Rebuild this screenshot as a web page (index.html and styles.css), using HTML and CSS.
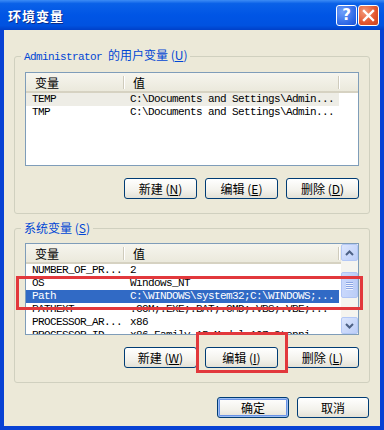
FILE: index.html
```html
<!DOCTYPE html>
<html lang="zh-CN">
<head>
    <meta charset="UTF-8">
    <title>环境变量</title>
    <link rel="stylesheet" href="styles.css">
</head>
<body>
    <div class="window">
        <div class="titlebar">
            <span class="title">环境变量</span>
            <div class="title-buttons">
                <span class="tbtn help">?</span>
                <span class="tbtn close">
                    <svg width="13" height="13" viewBox="0 0 13 13"><path d="M2 2 L11 11 M11 2 L2 11" stroke="#fff" stroke-width="2.4" stroke-linecap="square"/></svg>
                </span>
            </div>
        </div>
        <div class="body">
            <fieldset class="group">
                <legend><span class="latin">Administrator </span>的用户变量 (<u>U</u>)</legend>
                <div class="list list-user">
                    <div class="list-main">
                        <div class="list-head"><span>变量</span><span>值</span><span></span></div>
                        <div class="row inactive"><span>TEMP</span><span>C:\Documents and Settings\Admin...</span></div>
                        <div class="row"><span>TMP</span><span>C:\Documents and Settings\Admin...</span></div>
                    </div>
                </div>
                <div class="buttons">
                    <button class="btn">新建 (<u>N</u>)</button>
                    <button class="btn">编辑 (<u>E</u>)</button>
                    <button class="btn">删除 (<u>D</u>)</button>
                </div>
            </fieldset>
            <fieldset class="group group-system">
                <legend>系统变量 (<u>S</u>)</legend>
                <div class="list list-system">
                    <div class="list-main">
                        <div class="list-head"><span>变量</span><span>值</span><span></span></div>
                        <div class="row"><span>NUMBER_OF_PR...</span><span>2</span></div>
                        <div class="row"><span>OS</span><span>Windows_NT</span></div>
                        <div class="row selected"><span>Path</span><span>C:\WINDOWS\system32;C:\WINDOWS;...</span></div>
                        <div class="row"><span>PATHEXT</span><span>.COM;.EXE;.BAT;.CMD;.VBS;.VBE;...</span></div>
                        <div class="row"><span>PROCESSOR_AR...</span><span>x86</span></div>
                        <div class="row"><span>PROCESSOR_ID...</span><span>x86 Family 15 Model 107 Steppi...</span></div>
                    </div>
                    <div class="scrollbar">
                        <span class="sbtn">
                            <svg width="9" height="6" viewBox="0 0 9 6"><path d="M1 5 L4.5 1.5 L8 5" fill="none" stroke="#4D6185" stroke-width="2"/></svg>
                        </span>
                        <div class="track">
                            <span class="thumb"><i></i><i></i><i></i><i></i></span>
                        </div>
                        <span class="sbtn">
                            <svg width="9" height="6" viewBox="0 0 9 6"><path d="M1 1 L4.5 4.5 L8 1" fill="none" stroke="#4D6185" stroke-width="2"/></svg>
                        </span>
                    </div>
                </div>
                <div class="buttons">
                    <button class="btn">新建 (<u>W</u>)</button>
                    <button class="btn">编辑 (<u>I</u>)</button>
                    <button class="btn">删除 (<u>L</u>)</button>
                </div>
            </fieldset>
            <div class="footer">
                <button class="btn btn-wide default">确定</button>
                <button class="btn btn-wide">取消</button>
            </div>
        </div>
        <div class="mark mark-rows"></div>
        <div class="mark mark-edit"></div>
    </div>
</body>
</html>
```

FILE: styles.css
```css
body {
    margin: 0;
    font-family: "Noto Sans CJK SC", "DejaVu Sans", sans-serif;
    font-size: 12px;
    color: #000;
}
.window {
    position: relative;
    width: 384px;
    height: 430px;
    box-sizing: border-box;
    display: flex;
    flex-direction: column;
    background-color: #ECE9D8;
    border: 0 solid #0842D4;
    border-width: 0 4px 4px 4px;
}
.titlebar {
    height: 30px;
    margin: 0 -4px;
    padding: 0 5px 0 8px;
    display: flex;
    align-items: center;
    justify-content: space-between;
    background: linear-gradient(#3D8CF5 0%, #0A61E8 12%, #0055E5 50%, #0052E0 85%, #0040C8 100%);
}
.title {
    color: white;
    font-weight: bold;
    font-size: 13px;
    letter-spacing: 1px;
    text-shadow: 1px 1px 0 #0A2D8C;
}
.title-buttons {
    display: flex;
    gap: 1px;
}
.tbtn {
    width: 21px;
    height: 21px;
    box-sizing: border-box;
    border: 1px solid white;
    border-radius: 3px;
    display: flex;
    align-items: center;
    justify-content: center;
    color: white;
    font-family: "DejaVu Sans", sans-serif;
    font-weight: bold;
    font-size: 15px;
}
.help {
    background: radial-gradient(circle at 30% 30%, #6FA0FA, #2B66E6 70%, #1D52D4);
}
.close {
    background: radial-gradient(circle at 30% 30%, #F49A7A, #E2552E 60%, #C8431E);
}
.body {
    flex: 1;
    padding: 18px 10px 0 10px;
    display: flex;
    flex-direction: column;
}
.group {
    margin: 0;
    min-width: 0;
    padding: 8px 10px 14px 10px;
    border: 1px solid #D0D0BF;
    border-radius: 3px;
}
.group-system {
    margin-top: 7px;
}
legend {
    margin-left: -4px;
    padding: 0 3px;
    color: #0046D5;
    line-height: 14px;
}
.latin {
    font-family: "Liberation Mono", monospace;
    font-size: 11px;
    letter-spacing: -0.6px;
}
.list {
    display: flex;
    box-sizing: border-box;
    height: 94px;
    border: 1px solid #7F9DB9;
    background-color: white;
}
.list-system {
    height: 92px;
}
.list-main {
    flex: 1;
    min-width: 0;
    overflow: hidden;
}
.list-head {
    display: grid;
    grid-template-columns: 98px 215px 1fr;
    height: 20px;
    box-sizing: border-box;
    background: linear-gradient(#F6F5EE, #EBE9DC);
    border-bottom: 2px solid #D6D2C2;
    line-height: 18px;
}
.list-head span {
    padding-left: 9px;
    border-right: 1px solid #CFCBBC;
    margin: 3px 0 2px 0;
    line-height: 13px;
    box-shadow: 1px 0 0 white;
}
.list-head span:last-child {
    border-right: none;
    box-shadow: none;
}
.row {
    display: grid;
    grid-template-columns: 98px 215px;
    width: fit-content;
    height: 13px;
    line-height: 13px;
    font-family: "Liberation Mono", monospace;
    font-size: 11px;
    letter-spacing: -0.6px;
    white-space: nowrap;
}
.row span {
    padding-left: 6px;
    overflow: hidden;
}
.row.inactive {
    background-color: #EEEDE6;
}
.row.selected {
    background-color: #316AC5;
    color: white;
}
.scrollbar {
    width: 17px;
    display: flex;
    flex-direction: column;
    background-color: #F5F4EF;
}
.sbtn {
    height: 17px;
    box-sizing: border-box;
    display: flex;
    align-items: center;
    justify-content: center;
    background: linear-gradient(135deg, #DCE6FD, #BCCEF8);
    border: 1px solid #B4C8F6;
    border-radius: 2px;
}
.track {
    flex: 1;
    padding-top: 11px;
}
.thumb {
    height: 26px;
    box-sizing: border-box;
    display: flex;
    flex-direction: column;
    align-items: center;
    justify-content: center;
    gap: 1px;
    background: linear-gradient(90deg, #C9D8FC, #BBCDF7);
    border: 1px solid #B0C4F5;
    border-radius: 2px;
}
.thumb i {
    width: 7px;
    height: 1px;
    background-color: #8BA5E4;
    box-shadow: 0 1px 0 #EEF3FE;
}
.buttons, .footer {
    display: flex;
    justify-content: flex-end;
    gap: 8px;
    margin-top: 12px;
}
.footer {
    margin-top: 14px;
    margin-right: 1px;
}
.btn {
    width: 73px;
    height: 21px;
    padding: 0;
    font-family: "Noto Sans CJK SC", sans-serif;
    font-size: 12px;
    color: #000;
    background: linear-gradient(#FFFFFF, #F3F2EC 60%, #E3E1D6);
    border: 1px solid #003C74;
    border-radius: 3px;
}
.btn-wide {
    width: 72px;
}
.btn.default {
    box-shadow: inset 0 0 0 1px #9CBDF3, inset 0 0 0 2px #6A93E5;
}
.mark {
    position: absolute;
    border: 3px solid #E2383C;
}
.mark-rows {
    left: 12px;
    top: 276px;
    width: 341px;
    height: 28px;
}
.mark-edit {
    left: 192px;
    top: 332px;
    width: 86px;
    height: 35px;
}
```
